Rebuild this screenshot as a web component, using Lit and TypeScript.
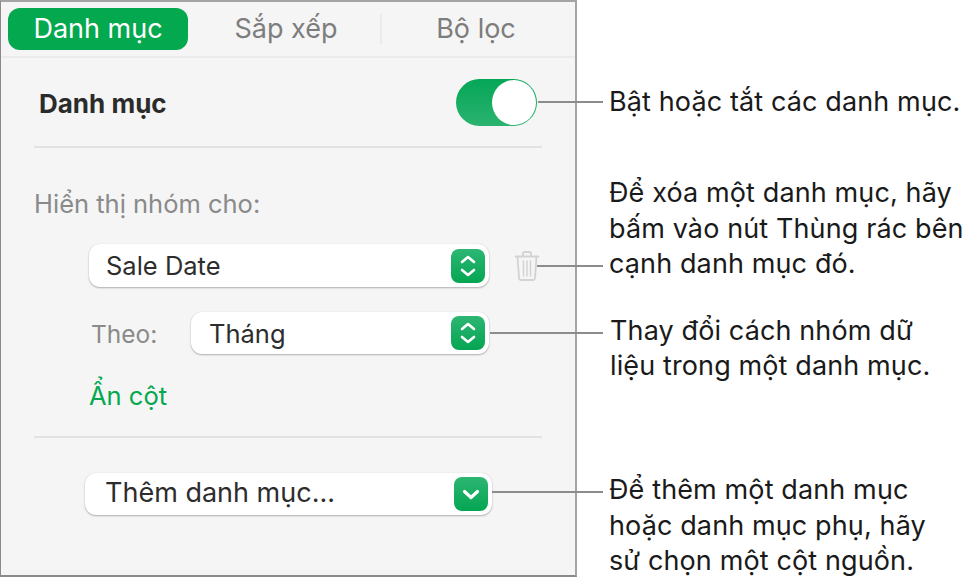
import { LitElement, html, css, svg } from "lit";
import { customElement } from "lit/decorators.js";

const updown = html`<svg viewBox="0 0 34 34" width="34" height="34"><path d="M11 13 17 8 23 13M11 21 17 26 23 21" fill="none" stroke="#fff" stroke-width="2.600" stroke-linecap="round" stroke-linejoin="round"/></svg>`;
const down = html`<svg viewBox="0 0 34 34" width="34" height="34"><path d="M10.500 14.500 17 20.500 23.500 14.500" fill="none" stroke="#fff" stroke-width="3.200" stroke-linecap="round" stroke-linejoin="round"/></svg>`;
const trash = html`<svg viewBox="0 0 26 32" width="26" height="32" fill="none" stroke="#d3d3d3" stroke-width="1.800" stroke-linecap="round" stroke-linejoin="round">
  <path d="M1.500 6.500H24.500M9 6V3.500Q9 2 10.500 2H15.500Q17 2 17 3.500V6M3.500 7 5 28Q5.200 30 7 30H19Q20.800 30 21 28L22.500 7"/>
  <path d="M9.500 11V26M13 11V26M16.500 11V26" stroke-width="1.500"/></svg>`;

@customElement("app-root")
export class AppRoot extends LitElement {
  static styles = css`
    :host { display: block; width: 977px; height: 587px; position: relative; background: #fff; overflow: hidden;
      font-family: Inter, "Liberation Sans", sans-serif; }
    .page { display: flex; align-items: flex-start; }
    .panel { box-sizing: border-box; width: 577px; height: 577px; background: #f5f5f5; border: 2px solid #a4a4a4; border-left-color: #8a8a8a; border-bottom-color: #8a8a8a; border-left-width: 1px; flex: none; }
    .tabs { display: flex; align-items: center; height: 56px; padding: 0 0 0 7px; box-sizing: border-box; border-bottom: 2px solid #ebebeb; }
    .tab { font-size: 27px; color: #7d7d7d; display: flex; align-items: center; justify-content: center; height: 42px; padding-bottom: 2px; box-sizing: border-box; }
    .tab.on { width: 180px; background: #04a84f; color: #fff; border-radius: 12px; }
    .t2 { width: 192px; padding-left: 4px; }
    .vr { width: 2px; height: 30px; background: #ebebeb; }
    .t3 { width: 188px; }
    .body { padding: 0 33px; }
    .head { display: flex; justify-content: space-between; align-items: center; height: 90px; border-bottom: 2px solid #e2e2e2; box-sizing: border-box; padding: 0 5px; }
    .head b { font-size: 26px; font-weight: 700; color: #2b2b2b; padding-top: 2px; }
    .toggle { width: 81px; height: 47px; border-radius: 24px; background: linear-gradient(#05a657, #2ab36f); position: relative; }
    .knob { position: absolute; right: 1px; top: 1px; width: 44px; height: 45px; border-radius: 50%; background: #fff; }
    .label { font-size: 25.500px; color: #8a8a8a; margin: 42px 0 0; line-height: 28px; height: 28px; white-space: nowrap; }
    .row { display: flex; align-items: center; }
    .r1 { margin: 26px 0 0 55px; }
    .r2 { margin: 25px 0 0 57px; }
    .sel { box-sizing: border-box; background: #fff; border-radius: 11px; box-shadow: 0 1px 2px rgba(0,0,0,.28), 0 0 1px rgba(0,0,0,.14); display: flex; align-items: center; justify-content: space-between; font-size: 25.500px; color: #2d2d2d; padding: 0 4px 0 17px; }
    .s1 { width: 400px; height: 43px; }
    .s2 { width: 298px; height: 42px; padding-left: 18px; }
    .s3 { width: 407px; height: 42px; padding-left: 20px; margin: 35px 0 0 51px; font-size: 27px; }
    .txt { padding-bottom: 3px; }
    .stepper { width: 34px; height: 34px; border-radius: 8px; background: linear-gradient(#2db673, #04a552); display: flex; }
    .trash { margin-left: 25px; display: flex; }
    .theo { font-size: 24.500px; color: #8a8a8a; width: 100px; padding-top: 1px; }
    .hide { font-size: 25.500px; color: #04a84f; margin: 26px 0 0 55px; line-height: 32px; }
    hr { border: 0; height: 2px; background: #e2e2e2; margin: 0; }
    .h2 { margin-top: 24px; }
    .notes { position: relative; flex: 1; font-size: 27px; line-height: 35.400px; color: #1a1a1a; padding-left: 32px; letter-spacing: 0.12px; }
    .n { white-space: nowrap; }
    .n1 { margin-top: 84px; }
    .n2 { margin-top: 56px; }
    .n3 { margin-top: 31px; padding-left: 1px; }
    .n4 { margin-top: 89px; }
    .leaders { position: absolute; inset: 0; pointer-events: none; }
  `;

  render() {
    const lines: [number, number, number][] = [[538, 603, 102], [537, 603, 266], [490, 603, 333], [492, 603, 492]];
    return html`<div class="page">
      <div class="panel">
        <div class="tabs">
          <div class="tab on">Danh mục</div>
          <div class="tab t2">Sắp xếp</div>
          <div class="vr"></div>
          <div class="tab t3">Bộ lọc</div>
        </div>
        <div class="body">
          <div class="head"><b>Danh mục</b><div class="toggle"><div class="knob"></div></div></div>
          <div class="label">Hiển thị nhóm cho:</div>
          <div class="row r1">
            <div class="sel s1"><span>Sale Date</span><span class="stepper">${updown}</span></div>
            <span class="trash">${trash}</span>
          </div>
          <div class="row r2">
            <span class="theo">Theo:</span>
            <div class="sel s2"><span>Tháng</span><span class="stepper">${updown}</span></div>
          </div>
          <div class="hide">Ẩn cột</div>
          <hr class="h2" />
          <div class="sel s3"><span class="txt">Thêm danh mục...</span><span class="stepper">${down}</span></div>
        </div>
      </div>
      <div class="notes">
        <div class="n n1">Bật hoặc tắt các danh mục.</div>
        <div class="n n2">Để xóa một danh mục, hãy<br />bấm vào nút Thùng rác bên<br />cạnh danh mục đó.</div>
        <div class="n n3">Thay đổi cách nhóm dữ<br />liệu trong một danh mục.</div>
        <div class="n n4">Để thêm một danh mục<br />hoặc danh mục phụ, hãy<br />sử chọn một cột nguồn.</div>
      </div>
    </div>
    <svg class="leaders" viewBox="0 0 977 587" width="977" height="587">
      ${lines.map(([a, b, y]) => svg`<line x1=${a} x2=${b} y1=${y} y2=${y} stroke="#8c8c8c" stroke-width="2"/>`)}
    </svg>`;
  }
}
